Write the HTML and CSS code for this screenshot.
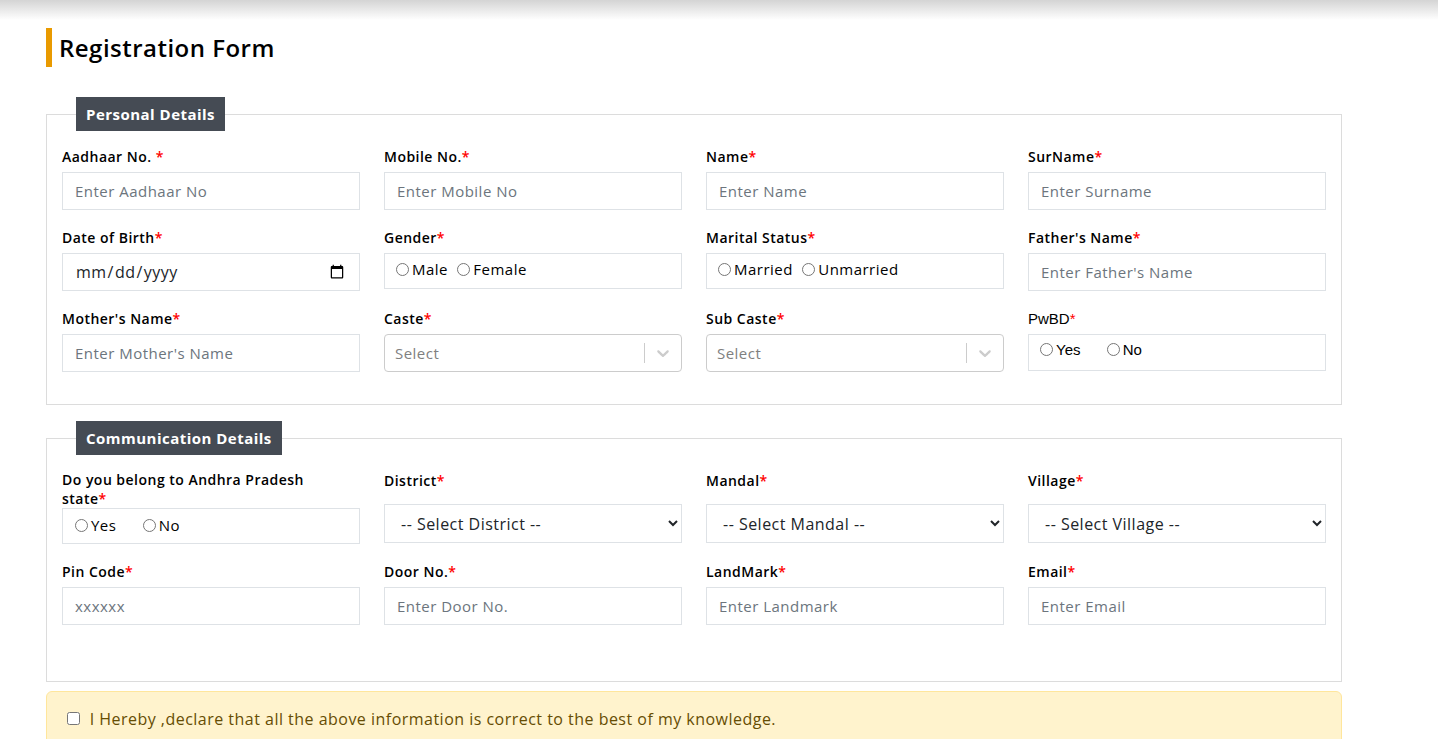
FILE: index.html
```html
<!DOCTYPE html>
<html lang="en">
<head>
    <meta charset="UTF-8">
    <meta name="viewport" content="width=device-width, initial-scale=1.0">
    <title>Registration Form</title>
    <link rel="stylesheet" href="styles.css">
</head>
<body>
    <div class="topbar"></div>
    <main class="page">
        <h1 class="page-title">Registration Form</h1>

        <fieldset class="section">
            <legend>Personal Details</legend>
            <div class="grid">
                <div class="field">
                    <label for="aadhaar">Aadhaar No. <span class="req">*</span></label>
                    <input type="text" id="aadhaar" class="control" placeholder="Enter Aadhaar No">
                </div>
                <div class="field">
                    <label for="mobile">Mobile No.<span class="req">*</span></label>
                    <input type="text" id="mobile" class="control" placeholder="Enter Mobile No">
                </div>
                <div class="field">
                    <label for="name">Name<span class="req">*</span></label>
                    <input type="text" id="name" class="control" placeholder="Enter Name">
                </div>
                <div class="field">
                    <label for="surname">SurName<span class="req">*</span></label>
                    <input type="text" id="surname" class="control" placeholder="Enter Surname">
                </div>

                <div class="field">
                    <label for="dob">Date of Birth<span class="req">*</span></label>
                    <input type="date" id="dob" class="control date">
                </div>
                <div class="field">
                    <label>Gender<span class="req">*</span></label>
                    <div class="radio-box">
                        <input type="radio" name="gender" id="male"><label for="male" class="opt">Male</label>
                        <input type="radio" name="gender" id="female"><label for="female" class="opt">Female</label>
                    </div>
                </div>
                <div class="field">
                    <label>Marital Status<span class="req">*</span></label>
                    <div class="radio-box">
                        <input type="radio" name="marital" id="married"><label for="married" class="opt">Married</label>
                        <input type="radio" name="marital" id="unmarried"><label for="unmarried" class="opt">Unmarried</label>
                    </div>
                </div>
                <div class="field">
                    <label for="father">Father's Name<span class="req">*</span></label>
                    <input type="text" id="father" class="control" placeholder="Enter Father's Name">
                </div>

                <div class="field">
                    <label for="mother">Mother's Name<span class="req">*</span></label>
                    <input type="text" id="mother" class="control" placeholder="Enter Mother's Name">
                </div>
                <div class="field">
                    <label>Caste<span class="req">*</span></label>
                    <div class="rs-control">
                        <span class="rs-placeholder">Select</span>
                        <span class="rs-sep"></span>
                        <svg class="rs-arrow" viewBox="0 0 20 20" width="20" height="20"><path d="M4.516 7.548c0.436-0.446 1.043-0.481 1.576 0l3.908 3.747 3.908-3.747c0.533-0.481 1.141-0.446 1.574 0 0.436 0.445 0.408 1.197 0 1.615-0.406 0.418-4.695 4.502-4.695 4.502-0.217 0.223-0.502 0.335-0.787 0.335s-0.57-0.112-0.789-0.335c0 0-4.287-4.084-4.695-4.502s-0.436-1.170 0-1.615z"/></svg>
                    </div>
                </div>
                <div class="field">
                    <label>Sub Caste<span class="req">*</span></label>
                    <div class="rs-control">
                        <span class="rs-placeholder">Select</span>
                        <span class="rs-sep"></span>
                        <svg class="rs-arrow" viewBox="0 0 20 20" width="20" height="20"><path d="M4.516 7.548c0.436-0.446 1.043-0.481 1.576 0l3.908 3.747 3.908-3.747c0.533-0.481 1.141-0.446 1.574 0 0.436 0.445 0.408 1.197 0 1.615-0.406 0.418-4.695 4.502-4.695 4.502-0.217 0.223-0.502 0.335-0.787 0.335s-0.57-0.112-0.789-0.335c0 0-4.287-4.084-4.695-4.502s-0.436-1.170 0-1.615z"/></svg>
                    </div>
                </div>
                <div class="field plain">
                    <label>PwBD<span class="req">*</span></label>
                    <div class="radio-box spaced">
                        <input type="radio" name="pwbd" id="pwbd-yes"><label for="pwbd-yes" class="opt">Yes</label>
                        <input type="radio" name="pwbd" id="pwbd-no"><label for="pwbd-no" class="opt">No</label>
                    </div>
                </div>
            </div>
        </fieldset>

        <fieldset class="section last">
            <legend>Communication Details</legend>
            <div class="grid">
                <div class="field">
                    <label class="two-line"><span>Do you belong to Andhra Pradesh</span><br>state<span class="req">*</span></label>
                    <div class="radio-box spaced ap">
                        <input type="radio" name="ap" id="ap-yes"><label for="ap-yes" class="opt">Yes</label>
                        <input type="radio" name="ap" id="ap-no"><label for="ap-no" class="opt">No</label>
                    </div>
                </div>
                <div class="field sel">
                    <label for="district">District<span class="req">*</span></label>
                    <select id="district" class="control select">
                        <option>-- Select District --</option>
                    </select>
                </div>
                <div class="field sel">
                    <label for="mandal">Mandal<span class="req">*</span></label>
                    <select id="mandal" class="control select">
                        <option>-- Select Mandal --</option>
                    </select>
                </div>
                <div class="field sel">
                    <label for="village">Village<span class="req">*</span></label>
                    <select id="village" class="control select">
                        <option>-- Select Village --</option>
                    </select>
                </div>

                <div class="field">
                    <label for="pincode">Pin Code<span class="req">*</span></label>
                    <input type="text" id="pincode" class="control" placeholder="xxxxxx">
                </div>
                <div class="field">
                    <label for="door">Door No.<span class="req">*</span></label>
                    <input type="text" id="door" class="control" placeholder="Enter Door No.">
                </div>
                <div class="field">
                    <label for="landmark">LandMark<span class="req">*</span></label>
                    <input type="text" id="landmark" class="control" placeholder="Enter Landmark">
                </div>
                <div class="field">
                    <label for="email">Email<span class="req">*</span></label>
                    <input type="text" id="email" class="control" placeholder="Enter Email">
                </div>
            </div>
        </fieldset>

        <div class="declaration">
            <input type="checkbox" id="declare">
            <label for="declare">I Hereby ,declare that all the above information is correct to the best of my knowledge.</label>
        </div>
    </main>
</body>
</html>
```

FILE: styles.css
```css
body {
    margin: 0;
    font-family: "Open Sans", Arial, sans-serif;
    letter-spacing: 0.03em;
    color: #000;
    background-color: #fff;
}
.topbar {
    height: 20px;
    background: linear-gradient(#d4d4d4, #fff);
}
.page {
    width: 1296px;
    padding-left: 46px;
}
.page-title {
    margin: 8px 0 30px;
    border-left: 6px solid #e99a00;
    padding-left: 7px;
    font-size: 24px;
    font-weight: 600;
    line-height: 39px;
}
.section {
    margin: 0;
    min-width: 0;
    border: 1px solid #dcdcdc;
    padding: 15px 15px 15px;
}
.section.last {
    margin-top: 16px;
    padding-bottom: 39px;
}
.section legend {
    margin-left: 14px;
    padding: 0 10px;
    height: 34px;
    line-height: 34px;
    background-color: #454b54;
    color: #fff;
    font-size: 15px;
    font-weight: 700;
}
.grid {
    display: grid;
    grid-template-columns: repeat(4, 1fr);
    column-gap: 24px;
}
.field {
    margin-bottom: 17px;
}
.field > label {
    display: block;
    font-size: 14px;
    font-weight: 600;
    line-height: 21px;
    margin-bottom: 5px;
}
.field > label.two-line {
    line-height: 19px;
    margin-bottom: 0;
}
.field.sel > label {
    margin-bottom: 13px;
}
.req {
    color: #f00;
}
.control {
    display: block;
    width: 100%;
    box-sizing: border-box;
    height: 38px;
    margin: 0;
    border: 1px solid #dee2e6;
    border-radius: 0;
    padding: 0 12px;
    font-family: inherit;
    font-size: 15px;
    letter-spacing: inherit;
    color: #212529;
    background-color: #fff;
}
.control::placeholder {
    color: #6c757d;
}
.control.date {
    font-size: 16px;
}
.control.select {
    height: 39px;
    padding: 0 6px 0 12px;
    font-size: 16px;
}
.radio-box {
    box-sizing: border-box;
    height: 36px;
    border: 1px solid #dee2e6;
    padding: 5px 6px 0;
    font-size: 15px;
}
.radio-box input {
    vertical-align: -1px;
}
.radio-box .opt {
    font-size: 15px;
}
.radio-box.spaced .opt {
    margin-right: 17px;
}
.radio-box.ap {
    height: 36px;
    padding: 6px 7px 0;
}
.plain,
.plain .radio-box {
    font-family: "Liberation Sans", Arial, sans-serif;
    letter-spacing: 0;
}
.plain > label {
    font-weight: 400;
    font-size: 15px;
}
.plain .radio-box {
    height: 37px;
}
.rs-control {
    display: flex;
    align-items: center;
    box-sizing: border-box;
    height: 38px;
    border: 1px solid #ccc;
    border-radius: 4px;
    padding-left: 10px;
}
.rs-placeholder {
    flex: 1;
    color: #808080;
    font-size: 15px;
}
.rs-sep {
    width: 1px;
    height: 20px;
    background-color: #ccc;
}
.rs-arrow {
    fill: #ccc;
    padding: 0 8px;
}
.declaration {
    margin-top: 9px;
    border: 1px solid #ffe69c;
    border-radius: 6px;
    background-color: #fff3cd;
    color: #664d03;
    padding: 15px 16px 16px;
    font-size: 16px;
    line-height: 24px;
}
.declaration label {
    margin-left: 2px;
}
```
